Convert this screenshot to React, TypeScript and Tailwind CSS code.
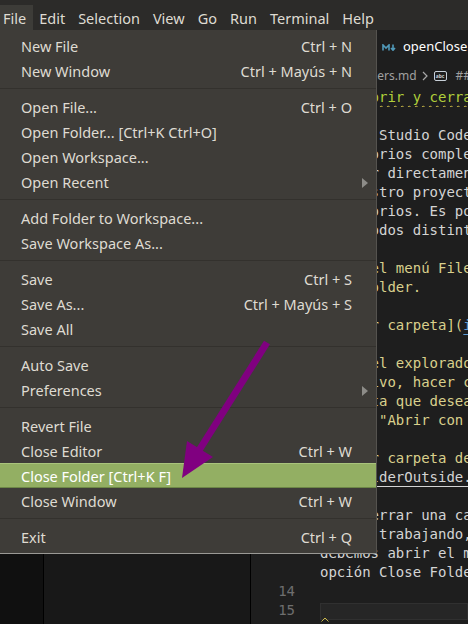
import React from "react";

type MenuItem =
  | { label: string; shortcut?: string; sub?: boolean; active?: boolean }
  | "sep";

const menuItems: MenuItem[] = [
  { label: "New File", shortcut: "Ctrl + N" },
  { label: "New Window", shortcut: "Ctrl + Mayús + N" },
  "sep",
  { label: "Open File...", shortcut: "Ctrl + O" },
  { label: "Open Folder... [Ctrl+K Ctrl+O]" },
  { label: "Open Workspace..." },
  { label: "Open Recent", sub: true },
  "sep",
  { label: "Add Folder to Workspace..." },
  { label: "Save Workspace As..." },
  "sep",
  { label: "Save", shortcut: "Ctrl + S" },
  { label: "Save As...", shortcut: "Ctrl + Mayús + S" },
  { label: "Save All" },
  "sep",
  { label: "Auto Save" },
  { label: "Preferences", sub: true },
  "sep",
  { label: "Revert File" },
  { label: "Close Editor", shortcut: "Ctrl + W" },
  { label: "Close Folder [Ctrl+K F]", active: true },
  { label: "Close Window", shortcut: "Ctrl + W" },
  "sep",
  { label: "Exit", shortcut: "Ctrl + Q" },
];

const topMenus = ["File", "Edit", "Selection", "View", "Go", "Run", "Terminal", "Help"];

const Yl = ({ children }: { children: React.ReactNode }) => (
  <span className="text-[#d9d08c]">{children}</span>
);
const Wh = ({ children }: { children: React.ReactNode }) => (
  <span className="text-[#d4d4d4]">{children}</span>
);

type Row = { n?: number; content?: React.ReactNode; current?: boolean };

const rows: Row[] = [
  {
    n: 1,
    content: (
      <span className="text-[#b0cf3a]">
        {"#### "}
        <span className="underline decoration-wavy decoration-[#d0bd48] decoration-1 underline-offset-[3px]">
          Abrir y cerrar carpetas
        </span>
      </span>
    ),
  },
  { n: 2 },
  { n: 3, content: <Wh>Visual Studio Code nos permite</Wh> },
  { content: <Wh>directorios completos, que</Wh> },
  { content: <Wh>y abrir directamente la</Wh> },
  { content: <Wh>de nuestro proyecto o</Wh> },
  { content: <Wh>directorios. Es posible</Wh> },
  { content: <Wh>en métodos distintos.</Wh> },
  { n: 4 },
  { n: 5, content: <Yl>Desde el menú File, elegir</Yl> },
  { content: <Yl>Open Folder.</Yl> },
  { n: 6 },
  {
    n: 7,
    content: (
      <>
        <Yl>{"![Abrir carpeta]("}</Yl>
        <span className="text-[#5b9bd5] underline underline-offset-[4px]">img/openFolder.png</span>
        <Yl>)</Yl>
      </>
    ),
  },
  { n: 8 },
  { n: 9, content: <Yl>Desde el explorador de</Yl> },
  { content: <Yl>y archivo, hacer clic</Yl> },
  { content: <Yl> carpeta que deseamos</Yl> },
  { content: <Yl>elegir "Abrir con Code"</Yl> },
  { n: 10 },
  { n: 11, content: <Yl>{"![Abrir carpeta desde fuera]("}</Yl> },
  {
    content: (
      <>
        <span className="text-[#d4d4d4] underline underline-offset-[4px]">openFolderOutside.png</span>
        <Yl>)</Yl>
      </>
    ),
  },
  { n: 12 },
  { n: 13, content: <Wh>Para cerrar una carpeta</Wh> },
  { content: <Wh>en que trabajando, solo</Wh> },
  { content: <Wh>debemos abrir el menú File y</Wh> },
  { content: <Wh>opción Close Folder.</Wh> },
  { n: 14 },
  { n: 15, current: true },
];

function MdIcon() {
  return (
    <svg width="14" height="7" viewBox="0 0 14 7" fill="none" stroke="#519aba" strokeWidth="1.6">
      <path d="M1 6.5V1L4 4L7 1V6.5" />
      <path d="M11 0.5V6M9 4L11 6.2L13 4" />
    </svg>
  );
}

export default function App() {
  return (
    <div className="relative h-[624px] w-[468px] overflow-hidden bg-[#1e1e1e] font-['Noto_Sans',sans-serif]">
      {/* menubar */}
      <div className="flex h-[30px] bg-[#2c2b29] text-[14.5px] text-[#dfdbd2]">
        <div className="ml-[-3.5px] flex">
          {topMenus.map((m, i) => (
            <div
              key={m}
              className={
                i === 0
                  ? "mt-[5px] h-[25px] bg-[#3d3c38] px-[6.5px] pt-[4px] leading-[19px]"
                  : "mt-[5px] h-[25px] px-[6.5px] pt-[4px] leading-[19px]"
              }
            >
              {m}
            </div>
          ))}
        </div>
      </div>

      {/* workbench */}
      <div className="flex h-[594px]">
        <div className="w-[44px] shrink-0 border-r border-black bg-[#101010]" />
        <div className="w-[207px] shrink-0 border-r border-black bg-[#181818]" />
        <div className="flex min-w-0 flex-1 flex-col overflow-hidden bg-[#1e1e1e]">
          {/* tabs */}
          <div className="flex h-[35px] shrink-0 overflow-hidden bg-[#252526]">
            <div className="w-[123px] shrink-0 border-r border-[#252526] bg-[#2d2d2d]" />
            <div className="flex shrink-0 items-center gap-[7px] whitespace-nowrap bg-[#1e1e1e] pb-[1px] pl-[8px] pr-[10px] text-[13px] text-white">
              <MdIcon />
              <span>openCloseFolders.md</span>
            </div>
          </div>
          {/* breadcrumb */}
          <div className="flex h-[22px] shrink-0 items-center whitespace-nowrap pl-[43px] text-[12px] text-[#a0a0a0]">
            <span className="shrink-0">openCloseFolders.md</span>
            <svg className="ml-[5px] shrink-0" width="6" height="10" viewBox="0 0 6 10" fill="none" stroke="#a8a8a8" strokeWidth="1.2">
              <path d="M1 1L5 5L1 9" />
            </svg>
            <div className="ml-[6px] flex h-[10px] w-[13px] shrink-0 items-center justify-center rounded-[2px] border border-[#c8d0d8] text-[5px] font-bold leading-none text-[#c8d0d8]">
              abc
            </div>
            <span className="ml-[9px] shrink-0">## Abrir y cerrar carpetas</span>
          </div>
          {/* text */}
          <div className="pt-[1px] font-['DejaVu_Sans_Mono',monospace] text-[14px] leading-[19px]">
            {rows.map((r, i) => (
              <div key={i} className="flex h-[19px]">
                <div className="w-[44px] shrink-0 text-right text-[#6e6e6e]">{r.n ?? ""}</div>
                <div className="w-[25px] shrink-0" />
                {r.current ? (
                  <div className="relative mt-[2px] flex-1 border border-[#303030] bg-[#262626]">
                    <svg className="absolute bottom-[-3px] left-[0px]" width="8" height="5" viewBox="0 0 8 5" fill="none" stroke="#c9b84a" strokeWidth="1">
                      <path d="M0.5 4.5L4 1L7.5 4.5" />
                    </svg>
                  </div>
                ) : (
                  <div className="flex-1 overflow-hidden whitespace-pre">{r.content}</div>
                )}
              </div>
            ))}
          </div>
        </div>
      </div>

      {/* File menu dropdown */}
      <div className="absolute left-0 top-[30px] w-[377px] border-b border-r border-b-[#9a9995] border-r-[#55534f] bg-[#3e3c38] pb-[4px] pt-[3px] text-[14.5px] text-[#dfdbd2]">
        {menuItems.map((it, i) =>
          it === "sep" ? (
            <div key={i} className="flex h-[11px] items-center">
              <div className="h-px w-full bg-[#33312d]" />
            </div>
          ) : (
            <div
              key={i}
              className={[
                "flex h-[25px] items-center justify-between whitespace-nowrap pl-[21px] pt-[2px]",
                it.sub ? "pr-[8px]" : "pr-[24px]",
                it.active ? "border-y border-t-[#a9c47c] border-b-[#6d8747] bg-[#93af63] text-white" : "",
              ].join(" ")}
            >
              <span>{it.label}</span>
              {it.shortcut ? <span>{it.shortcut}</span> : null}
              {it.sub ? (
                <svg width="6" height="10" viewBox="0 0 6 10">
                  <polygon points="0,0 6,5 0,10" fill="#8d8c88" />
                </svg>
              ) : null}
            </div>
          )
        )}
      </div>

      {/* annotation arrow */}
      <svg className="pointer-events-none absolute left-0 top-0" width="468" height="624">
        <line x1="267" y1="342.5" x2="198" y2="452" stroke="#800080" strokeWidth="7" />
        <polygon points="182,478 187,441 213,457" fill="#800080" />
      </svg>
    </div>
  );
}
